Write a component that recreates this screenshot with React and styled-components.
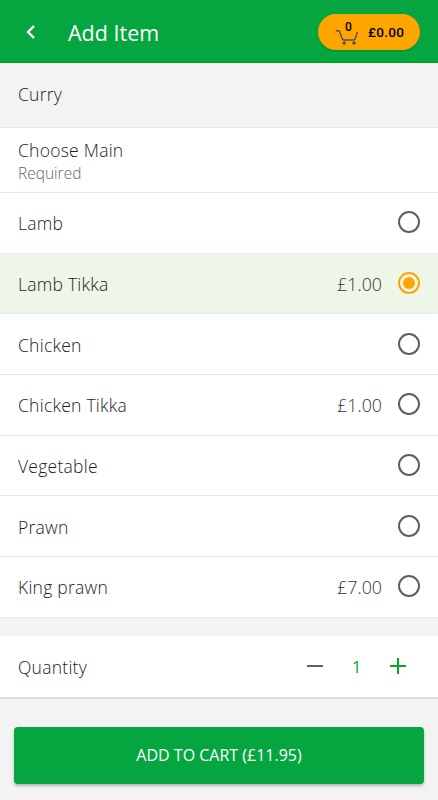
import React from 'react';
import styled, { createGlobalStyle } from 'styled-components';

const options = [
    { name: 'Lamb' },
    { name: 'Lamb Tikka', price: '£1.00', selected: true },
    { name: 'Chicken' },
    { name: 'Chicken Tikka', price: '£1.00' },
    { name: 'Vegetable' },
    { name: 'Prawn' },
    { name: 'King prawn', price: '£7.00' },
];

const App = () => {
    return (
        <Page>
            <GlobalStyle />
            <Header>
                <BackButton>
                    <svg width="14" height="16" viewBox="0 0 14 16" fill="none" stroke="#fff" strokeWidth="2.4">
                        <path d="M10 2 L4 8 L10 14" />
                    </svg>
                </BackButton>
                <Title>Add Item</Title>
                <CartPill>
                    <CartIcon>
                        <svg width="22" height="15" viewBox="0 0 22 15" fill="none" stroke="#4b5152" strokeWidth="1.4">
                            <path d="M0 0.8 H2.5 Q3.4 0.8 3.8 2 L6 8.5 Q6.5 10 8 10 H17.5 Q18.8 10 19.2 8.8 L21.4 1.8" />
                            <circle cx="8.2" cy="13" r="1.7" fill="#4b5152" stroke="none" />
                            <circle cx="18" cy="13" r="1.7" fill="#4b5152" stroke="none" />
                        </svg>
                        <CartCount>0</CartCount>
                    </CartIcon>
                    <CartTotal>£0.00</CartTotal>
                </CartPill>
            </Header>
            <Category>Curry</Category>
            <GroupHeader>
                <GroupName>Choose Main</GroupName>
                <GroupHint>Required</GroupHint>
            </GroupHeader>
            {options.map(option => (
                <OptionRow key={option.name} $selected={option.selected}>
                    <OptionName>{option.name}</OptionName>
                    {option.price && <Price>{option.price}</Price>}
                    <Radio $selected={option.selected} />
                </OptionRow>
            ))}
            <QuantityRow>
                <OptionName>Quantity</OptionName>
                <Stepper>
                    <StepIcon viewBox="0 0 16 16" stroke="#5f5f5f">
                        <path d="M0 8 H16" />
                    </StepIcon>
                    <Count>1</Count>
                    <StepIcon viewBox="0 0 16 16" stroke="#04a62c">
                        <path d="M0 8 H16 M8 0 V16" />
                    </StepIcon>
                </Stepper>
            </QuantityRow>
            <AddButton>ADD TO CART (£11.95)</AddButton>
        </Page>
    )
}

export default App;

const GlobalStyle = createGlobalStyle`
    html, body {
        margin: 0;
        padding: 0;
        background: #f3f3f3;
    }
`

const Page = styled.div`
    display: flex;
    flex-direction: column;
    width: 438px;
    height: 800px;
    overflow: hidden;
    background: #f3f3f3;
    font-family: 'Open Sans', 'Lato', sans-serif;
    font-weight: 300;
    color: #1c1c1c;
`

const Header = styled.header`
    display: flex;
    align-items: center;
    flex: none;
    height: 63px;
    padding: 2px 18px 0 24px;
    box-sizing: border-box;
    background: #05a63f;
    border-bottom: 1px solid #04a010;
`

const BackButton = styled.div`
    display: flex;
    width: 44px;
`

const Title = styled.h1`
    flex: 1;
    margin: 0;
    font-size: 21.5px;
    font-weight: 400;
    color: #fff;
`

const CartPill = styled.div`
    display: flex;
    align-items: center;
    width: 102px;
    height: 36px;
    padding-left: 18px;
    box-sizing: border-box;
    border-radius: 18px;
    background: #ffa500;
    box-shadow: 0 1px 2px rgba(0, 0, 0, 0.2);
`

const CartIcon = styled.div`
    position: relative;
    display: flex;
    width: 22px;
    height: 15px;
    margin-top: 10px;
`

const CartCount = styled.span`
    position: absolute;
    top: -9.5px;
    left: 9px;
    font-family: 'Roboto', sans-serif;
    font-size: 12px;
    font-weight: 500;
    color: #000;
`

const CartTotal = styled.span`
    margin-left: 10px;
    font-family: 'Roboto', sans-serif;
    font-size: 13.5px;
    font-weight: 500;
    letter-spacing: 0.3px;
    color: #000;
`

const Category = styled.div`
    display: flex;
    align-items: center;
    flex: none;
    height: 65px;
    padding: 0 18px 3px;
    box-sizing: border-box;
    border-bottom: 1px solid #e8e8e8;
    font-size: 17.5px;
    letter-spacing: 0.25px;
`

const GroupHeader = styled.div`
    display: flex;
    flex-direction: column;
    justify-content: center;
    flex: none;
    height: 65px;
    padding: 1px 18px 0;
    box-sizing: border-box;
    background: #fff;
    border-bottom: 1px solid #e8e8e8;
`

const GroupName = styled.div`
    font-size: 17.5px;
    letter-spacing: 0.25px;
    line-height: 24px;
`

const GroupHint = styled.div`
    font-size: 15.5px;
    line-height: 22px;
    color: #666;
`

const OptionRow = styled.div`
    display: flex;
    align-items: center;
    flex: none;
    height: 60.7px;
    padding: 0 18px;
    box-sizing: border-box;
    background: ${props => props.$selected ? '#eef6e8' : '#fff'};
    border-bottom: 1px solid #e8e8e8;
`

const OptionName = styled.span`
    flex: 1;
    padding-top: 1px;
    font-size: 17.5px;
    letter-spacing: 0.25px;
`

const Price = styled.span`
    margin-right: 16px;
    font-size: 17.8px;
    color: #333;
`

const Radio = styled.span`
    width: 22px;
    height: 22px;
    margin-top: -1px;
    box-sizing: border-box;
    border: 2px solid ${props => props.$selected ? '#ffa500' : '#5f5f5f'};
    border-radius: 50%;

    &::after {
        content: '';
        display: ${props => props.$selected ? 'block' : 'none'};
        width: 12px;
        height: 12px;
        margin: 3px;
        border-radius: 50%;
        background: #ffa500;
    }
`

const QuantityRow = styled.div`
    display: flex;
    align-items: center;
    flex: none;
    height: 63px;
    margin-top: 18px;
    padding: 0 18px;
    box-sizing: border-box;
    background: #fff;
    border-bottom: 2px solid #dcdcdc;
`

const Stepper = styled.div`
    display: flex;
    align-items: center;
    justify-content: space-between;
    width: 99px;
    margin-right: 14px;
`

const StepIcon = styled.svg`
    width: 16px;
    height: 16px;
    fill: none;
    stroke-width: 2;
`

const Count = styled.span`
    font-size: 17px;
    font-weight: 400;
    color: #04a62c;
`

const AddButton = styled.button`
    flex: none;
    width: 410px;
    height: 57px;
    margin: 28px 0 0 14px;
    border: none;
    border-radius: 4px;
    background: #05a63f;
    box-shadow: 0 2px 3px rgba(0, 0, 0, 0.25);
    font-family: inherit;
    font-size: 16px;
    font-weight: 400;
    color: #fff;
`
